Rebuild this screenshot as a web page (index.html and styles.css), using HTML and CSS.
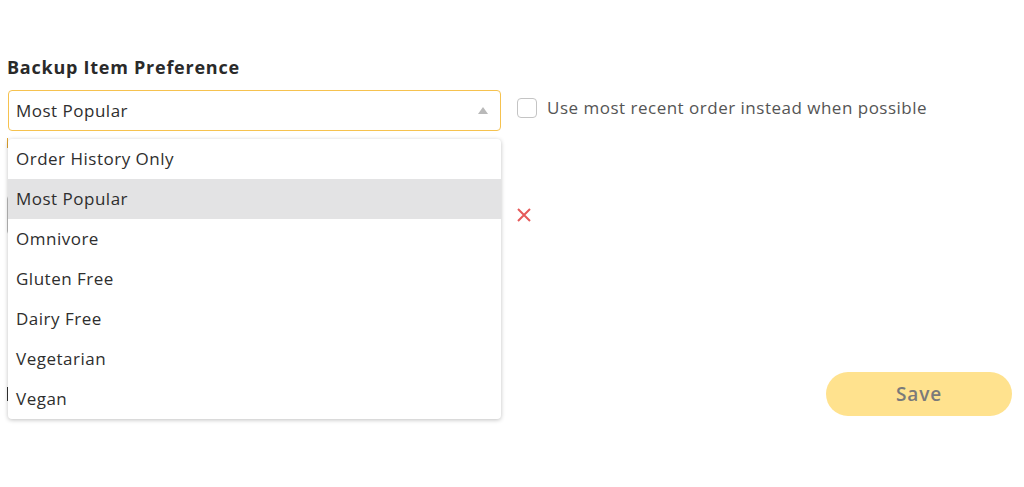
FILE: index.html
```html
<!DOCTYPE html>
<html lang="en">
<head>
    <meta charset="UTF-8">
    <meta name="viewport" content="width=device-width, initial-scale=1.0">
    <title>Backup Item Preference</title>
    <link rel="stylesheet" href="styles.css">
</head>
<body>
    <div class="page">
        <h3 class="title">Backup Item Preference</h3>

        <div class="row">
            <div class="select-wrap">
                <div class="select">
                    <span>Most Popular</span>
                    <span class="arrow"></span>
                </div>
                <ul class="menu">
                    <li>Order History Only</li>
                    <li class="active">Most Popular</li>
                    <li>Omnivore</li>
                    <li>Gluten Free</li>
                    <li>Dairy Free</li>
                    <li>Vegetarian</li>
                    <li>Vegan</li>
                </ul>
            </div>
            <label class="check">
                <span class="box"></span>
                Use most recent order instead when possible
            </label>
        </div>

        <div class="sub-label"></div>
        <div class="row exclude-row">
            <div class="input"></div>
            <svg class="remove" width="14" height="14" viewBox="0 0 14 14">
                <path d="M1 1 L13 13 M13 1 L1 13" stroke="#e65a5a" stroke-width="2" fill="none"/>
            </svg>
        </div>

        <div class="footer">
            <span class="add"></span>
            <button class="save">Save</button>
        </div>
    </div>
</body>
</html>
```

FILE: styles.css
```css
body {
    margin: 0;
    font-family: "Open Sans", Arial, sans-serif;
    color: #333;
    background: #fff;
}
.page {
    min-height: 100vh;
    box-sizing: border-box;
    padding: 54px 12px 0 8px;
}
.title {
    margin: 0 0 10px -1px;
    font-size: 18px;
    font-weight: 700;
    letter-spacing: 0.75px;
    color: #2a2a2a;
    line-height: 26px;
}
.row {
    display: flex;
    align-items: center;
    gap: 16px;
}
.select-wrap {
    position: relative;
    width: 493px;
}
.select {
    height: 39px;
    border: 1px solid #f6c24f;
    border-radius: 4px;
    display: flex;
    align-items: center;
    justify-content: space-between;
    padding: 0 12px 0 7px;
    font-size: 17px;
    letter-spacing: 0.5px;
    color: #2e2e2e;
}
.arrow {
    width: 0;
    height: 0;
    border-left: 5px solid transparent;
    border-right: 5px solid transparent;
    border-bottom: 7px solid #b9b9b9;
}
.menu {
    position: absolute;
    top: 49px;
    left: 0;
    width: 493px;
    margin: 0;
    padding: 0;
    list-style: none;
    background: #fff;
    border-radius: 4px;
    box-shadow: 0 1px 4px rgba(0, 0, 0, 0.25);
    z-index: 5;
}
.menu li {
    height: 40px;
    line-height: 40px;
    padding-left: 8px;
    font-size: 17px;
    letter-spacing: 0.5px;
    color: #2e2e2e;
}
.menu li.active {
    background: #e3e3e4;
}
.check {
    display: flex;
    align-items: center;
    gap: 10px;
    font-size: 17px;
    letter-spacing: 0.5px;
    color: #555;
    margin-top: -6px;
}
.box {
    width: 18px;
    height: 18px;
    border: 1px solid #c4c4c4;
    border-radius: 4px;
}
.sub-label {
    margin: 7px 0 0 -1px;
    width: 6px;
    height: 10px;
    border-left: 1px solid #e2a530;
}
.exclude-row {
    margin-top: 47px;
}
.input {
    width: 492px;
    height: 38px;
    margin-left: -1px;
    border: 1px solid #bbb;
    border-radius: 4px;
}
.footer {
    display: flex;
    align-items: center;
    justify-content: space-between;
    margin-top: 137px;
}
.add {
    width: 6px;
    height: 14px;
    margin-left: -1px;
    border-left: 2px solid #333;
}
.save {
    width: 186px;
    height: 44px;
    border: none;
    border-radius: 22px;
    background: #ffe28e;
    color: #7a7a7a;
    font-family: "Open Sans", Arial, sans-serif;
    font-size: 19px;
    font-weight: 600;
    letter-spacing: 0.8px;
}
```
